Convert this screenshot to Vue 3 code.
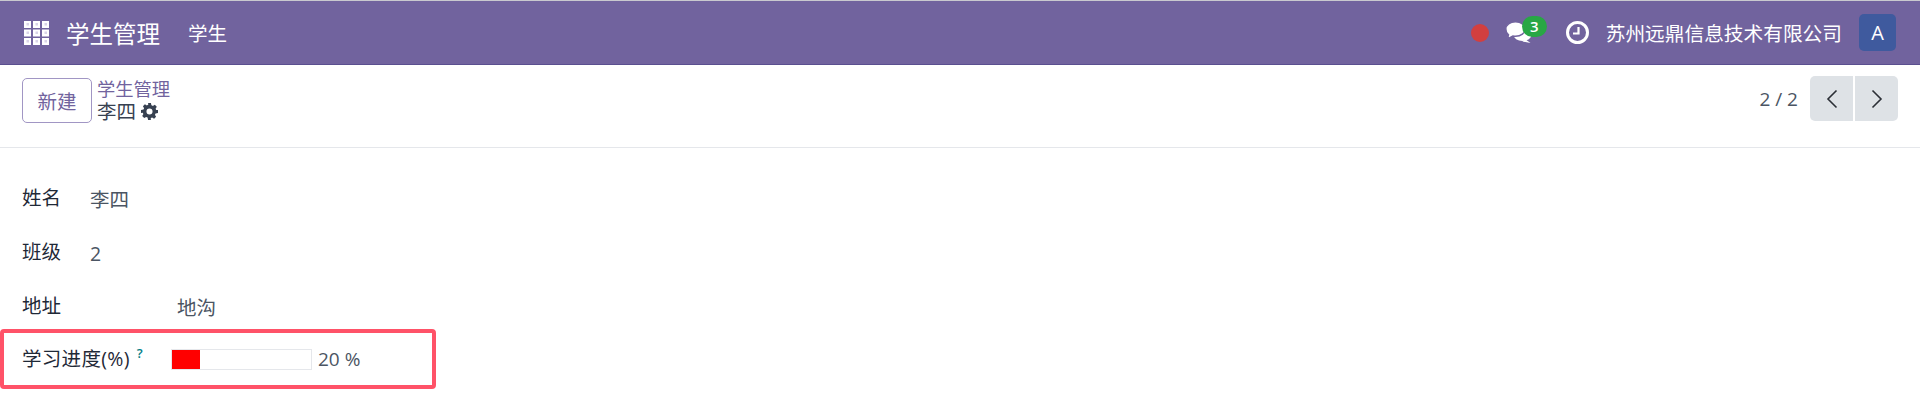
<template>
  <div class="page">
    <header class="navbar">
      <div class="nav-left">
        <svg class="apps" width="25" height="24" viewBox="0 0 25 24">
          <g v-for="c in appCells" :key="c.k">
            <rect :x="c.x" :y="c.y" width="7" height="7" fill="#fff" />
            <rect :x="c.x + 2.500" :y="c.y + 2" width="2.500" height="2.500" fill="#d9d4e8" />
          </g>
        </svg>
        <span class="brand">学生管理</span>
        <span class="menu">学生</span>
      </div>
      <div class="nav-right">
        <span class="dot"></span>
        <span class="chat">
          <svg width="27" height="23" viewBox="0 0 27 23">
            <ellipse cx="17.500" cy="14" rx="9" ry="6" fill="#fff" />
            <path fill="#fff" d="M20 18l5.500 4-8-1.500z" />
            <path fill="#fff" stroke="#71639e" stroke-width="1.500" d="M10.500 .800c5.500 0 9.700 3 9.700 7.200s-4.200 7.200-9.700 7.200c-.9 0-1.800-.1-2.600-.2L2.500 18l1-4.200C1.800 12.500 .8 10.400.8 8 .8 3.800 5 .800 10.500 .800z" />
          </svg>
          <span class="badge">3</span>
        </span>
        <svg class="clock" width="23" height="23" viewBox="0 0 23 23">
          <circle cx="11.500" cy="11.500" r="10" fill="none" stroke="#fff" stroke-width="3" />
          <path d="M12.500 6v6.500H7" fill="none" stroke="#fff" stroke-width="2.200" />
        </svg>
        <span class="company">苏州远鼎信息技术有限公司</span>
        <span class="avatar">A</span>
      </div>
    </header>

    <div class="control">
      <div class="control-left">
        <button class="btn-new">新建</button>
        <div class="crumbs">
          <a class="crumb-link">学生管理</a>
          <div class="crumb-current">
            <span>李四</span>
            <svg width="17" height="17" viewBox="0 0 24 24">
              <path fill="#374151" fill-rule="evenodd" d="M10 0h4l.7 3.200c.7.200 1.400.5 2 .9l2.800-1.700 2.800 2.800-1.700 2.800c.4.600.7 1.300.9 2L24 10v4l-3.500.7c-.2.700-.5 1.400-.9 2l1.700 2.800-2.800 2.800-2.800-1.700c-.6.400-1.300.7-2 .9L14 24h-4l-.7-3.500c-.7-.2-1.400-.5-2-.9l-2.800 1.700-2.800-2.800 1.700-2.800c-.4-.6-.7-1.300-.9-2L0 14v-4l3.500-.7c.2-.7.500-1.400.9-2L2.700 4.500l2.800-2.800 2.800 1.700c.6-.4 1.300-.7 2-.9zM12 7.700a4.300 4.300 0 1 0 0 8.600 4.300 4.300 0 0 0 0-8.600z" />
            </svg>
          </div>
        </div>
      </div>
      <div class="pager">
        <span class="pager-text">2 / 2</span>
        <div class="pager-btns">
          <button class="pg">
            <svg width="14" height="20" viewBox="0 0 14 20"><path d="M11.500 1.500 3 10l8.500 8.500" fill="none" stroke="#2b2f36" stroke-width="1.600" /></svg>
          </button>
          <button class="pg">
            <svg width="14" height="20" viewBox="0 0 14 20"><path d="M2.500 1.500 11 10l-8.500 8.500" fill="none" stroke="#2b2f36" stroke-width="1.600" /></svg>
          </button>
        </div>
      </div>
    </div>

    <main class="form">
      <div class="row">
        <label class="lbl">姓名</label>
        <span class="val val-name">李四</span>
      </div>
      <div class="row">
        <label class="lbl">班级</label>
        <span class="val val-name">2</span>
      </div>
      <div class="row">
        <label class="lbl">地址</label>
        <span class="val val-addr">地沟</span>
      </div>
      <div class="row-progress">
        <label class="lbl lbl-progress">学习进度(%)<sup class="help">?</sup></label>
        <div class="bar"><div class="bar-fill" :style="{ width: progress + '%' }"></div></div>
        <span class="val pct">{{ progress }} %</span>
      </div>
    </main>
  </div>
</template>

<script setup>
const progress = 20;

// grille 3x3 de l'icone des applications
const appCells = [];
for (let y = 0; y < 3; y++) {
  for (let x = 0; x < 3; x++) {
    appCells.push({ k: x + "-" + y, x: x * 9, y: y * 8.500 });
  }
}
</script>

<style>
html, body {
  margin: 0;
  background: #fff;
}
</style>

<style scoped>
.page {
  font-family: "Open Sans", "Noto Sans CJK SC", sans-serif;
  font-size: 19.5px;
  color: #374151;
}

.navbar {
  height: 63px;
  border-top: 1px solid #c9c9cf;
  border-bottom: 1px solid #5a4f8f;
  background: #71639e;
  display: flex;
  justify-content: space-between;
  align-items: center;
  color: #fff;
  padding: 0 24px 0 24px;
}

.nav-left,
.nav-right {
  display: flex;
  align-items: center;
}

.brand {
  font-size: 23.500px;
  margin-left: 17px;
}

.menu {
  font-size: 19.500px;
  margin-left: 28px;
}

.dot {
  width: 18px;
  height: 18px;
  border-radius: 50%;
  background: #d23f3f;
}

.chat {
  position: relative;
  display: flex;
  margin-left: 16px;
  width: 27px;
  height: 23px;
}

.badge {
  position: absolute;
  top: -5px;
  left: 17px;
  width: 25px;
  height: 21px;
  border-radius: 11px;
  background: #28a745;
  font-size: 15px;
  font-weight: 600;
  line-height: 20px;
  text-align: center;
}

.clock {
  margin-left: 34px;
}

.company {
  font-size: 19.700px;
  margin-left: 17px;
}

.avatar {
  width: 37px;
  height: 37px;
  margin-left: 17px;
  border-radius: 5px;
  background: #3f5a9e;
  font-size: 20px;
  line-height: 37px;
  text-align: center;
}

.control {
  height: 83px;
  box-sizing: border-box;
  border-bottom: 1px solid #e5e7eb;
  display: flex;
  justify-content: space-between;
  padding: 13px 22px 0 22px;
}

.control-left {
  display: flex;
  gap: 5px;
}

.btn-new {
  width: 70px;
  height: 45px;
  background: #fff;
  border: 1px solid #a196c4;
  border-radius: 5px;
  color: #71639e;
  font: inherit;
  padding: 0;
}

.crumbs {
  line-height: 23px;
  margin-top: -1px;
}

.crumb-link {
  display: block;
  color: #71639e;
  font-size: 18.300px;
}

.crumb-current {
  display: flex;
  align-items: center;
  gap: 5px;
  color: #374151;
}

.pager {
  display: flex;
  gap: 12px;
  align-items: center;
  height: 45px;
  margin-top: -2px;
}

.pager-text {
  font-size: 19px;
  color: #4b5563;
}

.pager-btns {
  display: flex;
  gap: 2px;
}

.pg {
  width: 43px;
  height: 45px;
  border: none;
  background: #dee2e6;
  padding: 0;
  display: flex;
  align-items: center;
  justify-content: center;
}

.pg:first-child {
  border-radius: 5px 0 0 5px;
}

.pg:last-child {
  border-radius: 0 5px 5px 0;
}

.form {
  padding-top: 38px;
}

.row {
  height: 24px;
  margin-bottom: 30px;
  padding-left: 22px;
  display: flex;
}

.lbl {
  width: 68px;
  color: #1f2937;
  line-height: 24px;
}

.val {
  color: #4b5563;
  line-height: 24px;
}

.val-name {
  margin-top: 2px;
}

.val-addr {
  margin-top: 2px;
  margin-left: 87px;
}

.row-progress {
  width: 436px;
  height: 60px;
  box-sizing: border-box;
  margin-top: -19px;
  border: 4px solid #ff5268;
  border-radius: 4px;
  display: flex;
  align-items: center;
  padding-left: 18px;
}

.lbl-progress {
  width: 149px;
  letter-spacing: .3px;
  white-space: nowrap;
}

.help {
  color: #017e84;
  font-size: 13px;
  font-weight: 600;
  margin-left: 7px;
  vertical-align: 8px;
  line-height: 0;
}

.bar {
  width: 141px;
  height: 21px;
  box-sizing: border-box;
  border: 1px solid #e5e7eb;
}

.bar-fill {
  height: 100%;
  background: #f00;
}

.pct {
  margin-left: 6px;
  font-size: 19px;
}
</style>
